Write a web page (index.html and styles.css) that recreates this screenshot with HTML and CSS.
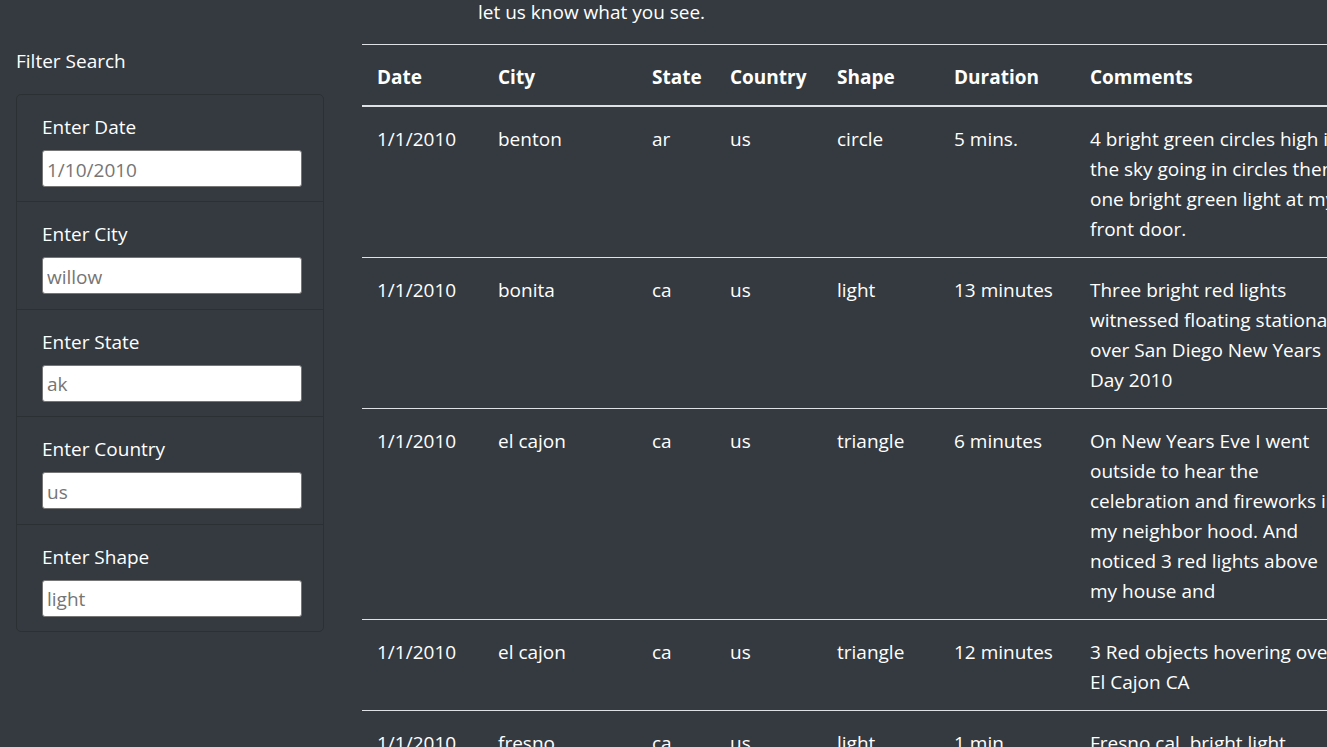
FILE: index.html
```html
<!DOCTYPE html>
<html lang="en">
<head>
<meta charset="utf-8">
<title>UFO Sightings</title>
<link rel="stylesheet" href="styles.css">
</head>
<body>
<div class="page">
  <aside class="sidebar">
    <h2 class="sidebar-title">Filter Search</h2>
    <ul class="filters">
      <li class="filter">
        <label class="filter-label" for="datetime">Enter Date</label>
        <input class="filter-input" id="datetime" type="text" placeholder="1/10/2010">
      </li>
      <li class="filter">
        <label class="filter-label" for="city">Enter City</label>
        <input class="filter-input" id="city" type="text" placeholder="willow">
      </li>
      <li class="filter">
        <label class="filter-label" for="state">Enter State</label>
        <input class="filter-input" id="state" type="text" placeholder="ak">
      </li>
      <li class="filter">
        <label class="filter-label" for="country">Enter Country</label>
        <input class="filter-input" id="country" type="text" placeholder="us">
      </li>
      <li class="filter">
        <label class="filter-label" for="shape">Enter Shape</label>
        <input class="filter-input" id="shape" type="text" placeholder="light">
      </li>
    </ul>
  </aside>
  <main class="content">
    <p class="intro">let us know what you see.</p>
    <table class="ufo-table">
      <thead>
        <tr>
          <th class="c-date">Date</th>
          <th class="c-city">City</th>
          <th class="c-state">State</th>
          <th class="c-country">Country</th>
          <th class="c-shape">Shape</th>
          <th class="c-duration">Duration</th>
          <th class="c-comments">Comments</th>
        </tr>
      </thead>
      <tbody>
        <tr>
          <td>1/1/2010</td><td>benton</td><td>ar</td><td>us</td><td>circle</td><td>5 mins.</td>
          <td>4 bright green circles high in<br>the sky going in circles then<br>one bright green light at my<br>front door.</td>
        </tr>
        <tr>
          <td>1/1/2010</td><td>bonita</td><td>ca</td><td>us</td><td>light</td><td>13 minutes</td>
          <td>Three bright red lights<br>witnessed floating stationary<br>over San Diego New Years<br>Day 2010</td>
        </tr>
        <tr>
          <td>1/1/2010</td><td>el cajon</td><td>ca</td><td>us</td><td>triangle</td><td>6 minutes</td>
          <td>On New Years Eve I went<br>outside to hear the<br>celebration and fireworks in<br>my neighbor hood. And<br>noticed 3 red lights above<br>my house and</td>
        </tr>
        <tr>
          <td>1/1/2010</td><td>el cajon</td><td>ca</td><td>us</td><td>triangle</td><td>12 minutes</td>
          <td>3 Red objects hovering over<br>El Cajon CA</td>
        </tr>
        <tr>
          <td>1/1/2010</td><td>fresno</td><td>ca</td><td>us</td><td>light</td><td>1 min</td>
          <td>Fresno cal. bright light<br>moving across the sky</td>
        </tr>
      </tbody>
    </table>
  </main>
</div>
</body>
</html>
```
FILE: styles.css
```css
html, body {
  margin: 0;
  padding: 0;
  overflow: hidden;
  background: #343a40;
}

body {
  color: #ffffff;
  font-family: "Open Sans", "Noto Sans", "DejaVu Sans", sans-serif;
  font-size: 19px;
  line-height: 30px;
}

.page {
  display: flex;
  align-items: flex-start;
}

.sidebar {
  flex: 0 0 308px;
  width: 308px;
  min-width: 0;
  margin-left: 16px;
  margin-right: 38px;
  padding-top: 46px;
}

.sidebar-title {
  margin: 0 0 18px;
  font-size: 19px;
  font-weight: 400;
  line-height: 30px;
}

.filters {
  box-sizing: border-box;
  width: 308px;
  list-style: none;
  margin: 0;
  padding: 0;
  border: 1px solid rgba(0, 0, 0, 0.16);
  border-radius: 5px;
}

.filter {
  padding: 17px 25px 14.4px;
  border-top: 1px solid rgba(0, 0, 0, 0.16);
}

.filter:first-child {
  border-top: 0;
}

.filter-label {
  display: block;
  margin-bottom: 8px;
}

.filter-input {
  box-sizing: border-box;
  display: block;
  width: 260px;
  height: 37px;
  margin: 0;
  padding: 2px 4px 0;
  border: 1px solid #767676;
  border-radius: 3px;
  background: #ffffff;
  color: #495057;
  font-family: inherit;
  font-size: 19px;
  line-height: 30px;
}

.filter-input::placeholder {
  color: #757575;
  opacity: 1;
}

.content {
  flex: none;
}

.intro {
  margin: -3px 0 17px 116px;
}

.ufo-table {
  border-collapse: collapse;
  table-layout: fixed;
  width: 1023px;
  color: #ffffff;
}

.ufo-table th,
.ufo-table td {
  box-sizing: border-box;
  padding: 17px 15px 13px;
  text-align: left;
  vertical-align: top;
  border-top: 1px solid #dee2e6;
}

.ufo-table thead th {
  font-weight: 700;
  border-bottom: 2px solid #dee2e6;
}

.c-date { width: 121px; }
.c-city { width: 154px; }
.c-state { width: 78px; }
.c-country { width: 107px; }
.c-shape { width: 117px; }
.c-duration { width: 136px; }
.c-comments { width: 310px; }
```
